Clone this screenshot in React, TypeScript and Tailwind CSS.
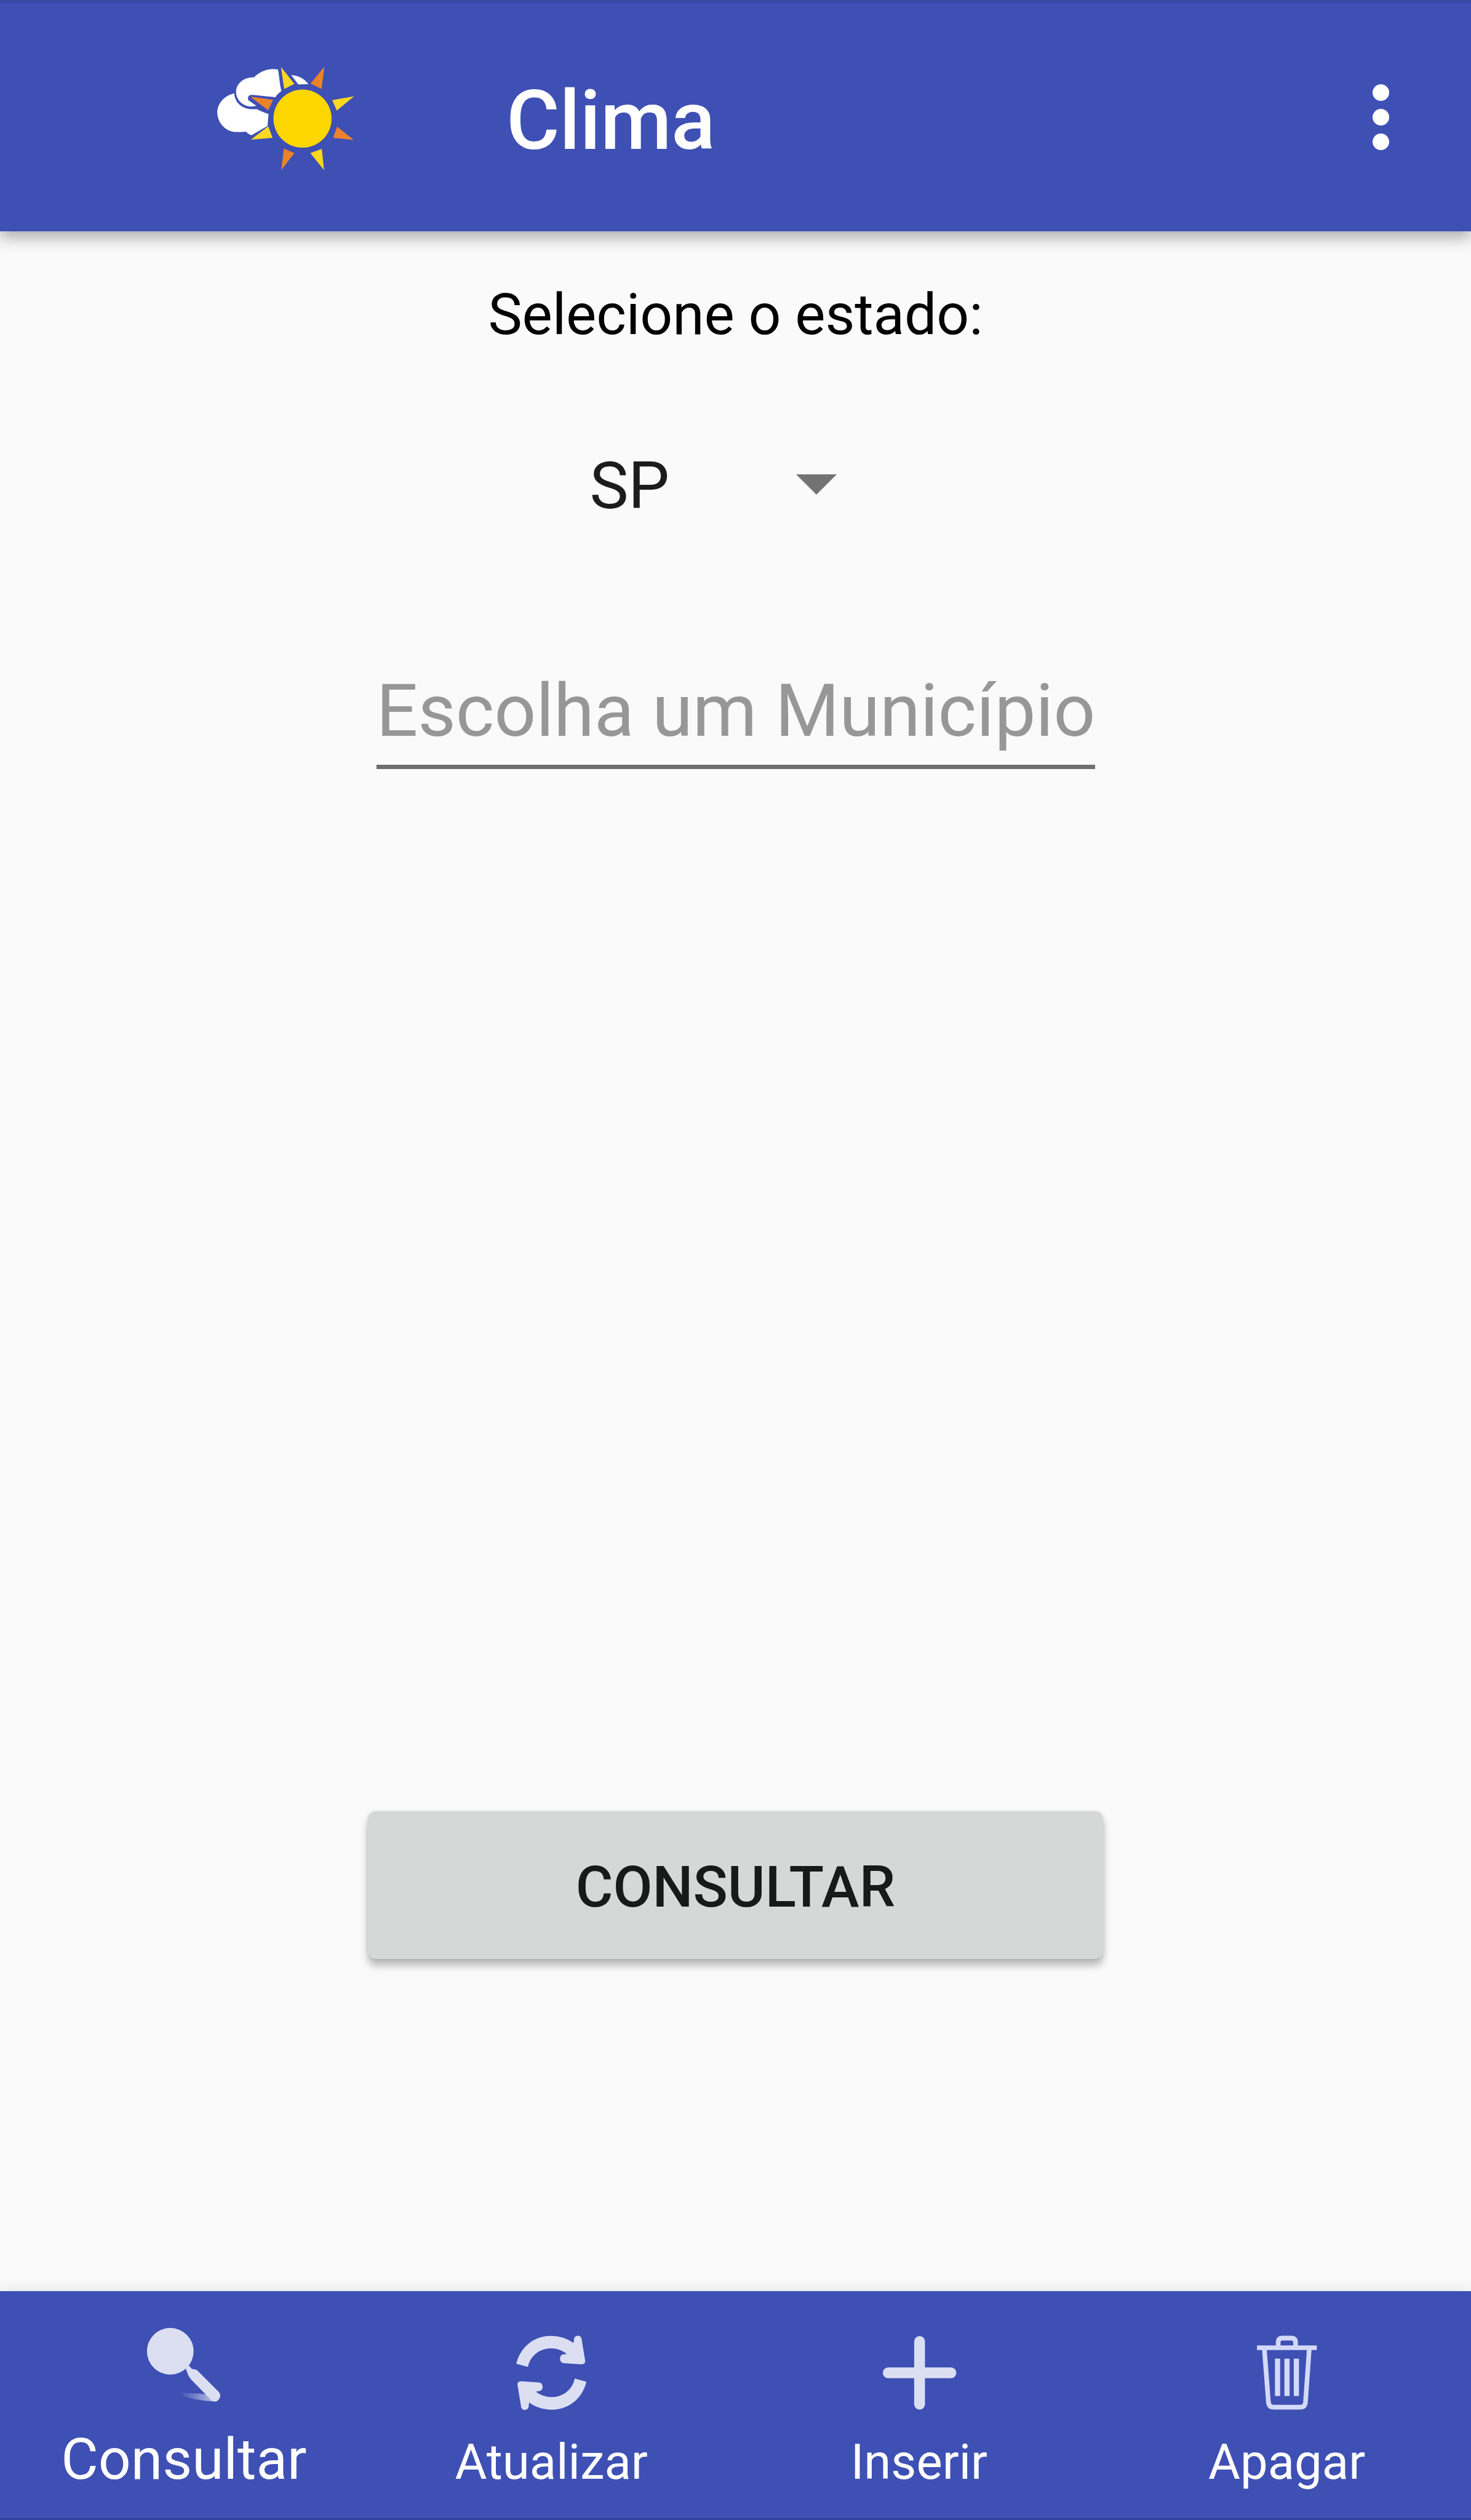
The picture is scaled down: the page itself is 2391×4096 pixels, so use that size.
import type { ReactNode } from "react";

function WeatherLogo() {
  return (
    <svg viewBox="0 0 1080 840" className="h-[223px] w-[287px]" aria-hidden="true">
      <g fill="#fff">
        <path d="M232 270C175 282 128 330 128 388C132 460 185 506 245 507C270 508 290 507 302 504C312 515 325 524 338 526L436 470L442 396C415 388 390 376 368 366C300 375 236 340 232 270Z" />
        <path d="M500 124C440 113 390 135 353 172C290 170 243 210 243 262C245 320 300 365 368 347L318 312C312 290 322 276 345 280L484 294C492 280 505 267 521 256C510 215 508 165 500 124Z" />
        <path d="M581 158C620 160 660 178 686 214L624 216Z" />
      </g>
      <g fill="#fdd821">
        <path d="M518 108L600 212L538 244Z" />
        <path d="M966 288L832 312L860 376Z" />
        <path d="M334 554L440 472L467 542Z" />
        <path d="M782 740L698 636L768 610Z" />
      </g>
      <g fill="#ec832a">
        <path d="M784 106L700 210L766 244Z" />
        <path d="M330 290L470 310L440 374Z" />
        <path d="M964 556L862 474L838 542Z" />
        <path d="M520 740L536 608L600 636Z" />
      </g>
      <circle cx="650" cy="425" r="178" fill="#fed600" />
    </svg>
  );
}

function SearchIcon() {
  return (
    <svg viewBox="0 0 200 200" className="size-[159.4px]" aria-hidden="true">
      <defs>
        <linearGradient id="handleShadow" x1="0" x2="1">
          <stop offset="0" stopColor="#dcdff2" stopOpacity="0" />
          <stop offset="1" stopColor="#dcdff2" stopOpacity="0.85" />
        </linearGradient>
      </defs>
      <path d="M92 158Q125 157 158 162L168 174.7Q120 174 92 160Z" fill="url(#handleShadow)" />
      <g fill="#dcdff2">
        <circle cx="72.5" cy="72.5" r="47.6" />
        <path d="M104 108L110 101L117 109Q124 108 129 113L172 156Q177 163 172 170Q167 177 158 174L116 131Q109 123 108 118Z" />
      </g>
    </svg>
  );
}

function RefreshIcon() {
  const arrow =
    "M27.7 81.7C36 48 63 24.7 98.3 24.7C116 24.7 132 30 144.5 39.3L145.5 32C146 22 160 22 161 31L168.3 75Q169 82.7 161 82.7L124 80.3Q117 79 117 71Q117 64 124 62.5L131 61.7Q117 50.3 98.3 50.3C74 50.3 55 68 51.7 88.3Z";
  return (
    <svg viewBox="0 0 200 200" className="size-[159.4px]" fill="#dcdff2" aria-hidden="true">
      <path d={arrow} />
      <path d={arrow} transform="rotate(180 99.3 100)" />
    </svg>
  );
}

function PlusIcon() {
  return (
    <svg viewBox="0 0 200 200" className="size-[159.4px]" stroke="#dcdff2" strokeWidth="22" strokeLinecap="round" aria-hidden="true">
      <path d="M100 36V164M36 100H164" />
    </svg>
  );
}

function TrashIcon() {
  return (
    <svg viewBox="0 0 200 200" className="size-[159.4px]" fill="none" stroke="#d3d9f8" strokeWidth="9.5" aria-hidden="true">
      <path d="M39 49H161" />
      <path d="M82.3 48V38Q82.3 29.3 91 29.3H109Q117.7 29.3 117.7 38V48" />
      <path d="M54 50L62.4 160Q63.5 170.2 73 170.2H127Q137 170.2 138 160L145.8 50" />
      <path d="M81 71.3V147.3M100.3 71.3V147.3M119.4 71.3V147.3" strokeWidth="10.5" />
    </svg>
  );
}

function Tab({ icon, label, active = false }: { icon: ReactNode; label: string; active?: boolean }) {
  return (
    <button
      className={
        active
          ? "flex flex-1 flex-col items-center pt-[39.5px] text-[93px] leading-[110px]"
          : "flex flex-1 flex-col items-center pt-[53px] text-[79.7px] leading-[96px]"
      }
    >
      {icon}
      <span className={active ? "mt-[20px]" : "mt-[18px] pr-[1px]"}>{label}</span>
    </button>
  );
}

export default function App() {
  return (
    <div className="flex h-[4096px] w-[2391px] flex-col overflow-hidden bg-[#fafafa] font-['Roboto',sans-serif]">
      <header className="relative z-10 flex h-[376px] shrink-0 items-start border-t-[5px] border-[#3848a5] bg-[#3e50b4] pl-[319px] shadow-[0_10px_24px_rgba(0,0,0,0.32)]">
        <div className="mt-[75px] w-[504px]">
          <WeatherLogo />
        </div>
        <h1 className="mt-[112px] text-[132.8px] leading-[160px] font-medium tracking-[-0.5px] text-white">Clima</h1>
        <button className="mt-[132px] mr-[133px] ml-auto flex flex-col gap-[13px]" aria-label="Menu">
          <span className="size-[27px] rounded-full bg-white" />
          <span className="size-[27px] rounded-full bg-white" />
          <span className="size-[27px] rounded-full bg-white" />
        </button>
      </header>

      <main className="flex flex-1 flex-col items-center">
        <p className="mt-[81px] text-[93px] leading-[110px] tracking-[-0.15px] text-black">Selecione o estado:</p>
        <button className="mt-[158px] flex h-[130px] w-[474px] items-center justify-between pr-[73px] text-[106.3px] leading-[130px] tracking-[-0.5px] text-[#1c1c1c]">
          <span>SP</span>
          <svg viewBox="0 0 66 33" className="mb-[5px] h-[33px] w-[66px]" fill="#737373" aria-hidden="true">
            <path d="M0 0H66L33 33Z" />
          </svg>
        </button>
        <div className="mt-[229px] w-[1168px] border-b-[7px] border-[#6f6f6f] pb-[17px] text-[119.6px] leading-[142px] tracking-[-0.2px] whitespace-nowrap text-[#979797]">
          Escolha um Município
        </div>
        <button className="mt-[1694px] h-[240px] w-[1195px] rounded-[13px] bg-[#d6d8d7] pt-[8px] text-[93px] leading-[110px] font-medium text-[#181a19] shadow-[0_11px_13px_rgba(0,0,0,0.26),0_0_6px_rgba(0,0,0,0.1)]">
          CONSULTAR
        </button>
      </main>

      <nav className="flex h-[372px] shrink-0 items-start border-b-[3px] border-[#2f3f9c] bg-[#3e50b4] text-white shadow-[0_0_24px_rgba(0,0,0,0.1)]">
        <Tab active icon={<SearchIcon />} label="Consultar" />
        <Tab icon={<RefreshIcon />} label="Atualizar" />
        <Tab icon={<PlusIcon />} label="Inserir" />
        <Tab icon={<TrashIcon />} label="Apagar" />
      </nav>
    </div>
  );
}
